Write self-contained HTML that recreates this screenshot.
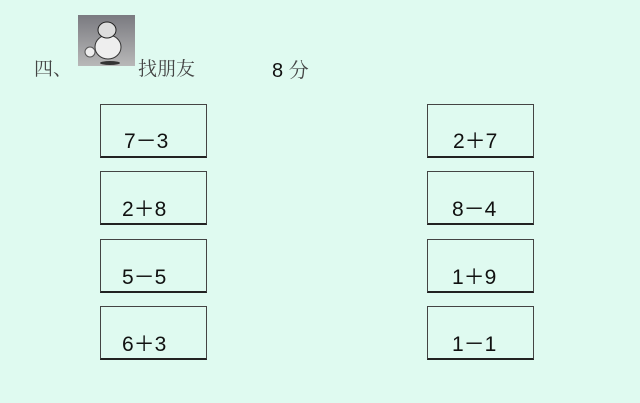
<!DOCTYPE html>
<html><head><style>
body{margin:0;width:640px;height:403px;background:#dffaf0;position:relative;overflow:hidden;font-family:"Liberation Sans","Noto Sans CJK SC",sans-serif;}
.b{position:absolute;width:105px;height:51px;border:1.5px solid #444;border-bottom:2.5px solid #222;box-sizing:content-box;}
.t{position:absolute;font-size:21px;color:#111;}
.h{position:absolute;font-family:"Noto Serif CJK SC",serif;font-size:19px;color:#444;}
</style></head><body>
<div class="h" style="left:34px;top:54px">四、</div>
<div style="position:absolute;left:78px;top:15px;width:57px;height:51px;background:linear-gradient(#7a7a80,#b8b8b8);">
<svg width="57" height="51"><ellipse cx="30" cy="32" rx="13" ry="12" fill="#eee" stroke="#333"/><ellipse cx="29" cy="15" rx="9" ry="8" fill="#ddd" stroke="#222"/><circle cx="12" cy="37" r="5" fill="#eee" stroke="#555"/><ellipse cx="32" cy="48" rx="10" ry="2" fill="#333"/></svg></div>
<div class="h" style="left:138px;top:54px">找朋友</div>
<div class="t" style="left:272px;top:54px;font-size:20px">8 <span style="font-family:'Noto Serif CJK SC',serif;color:#444">分</span></div>

<div class="b" style="left:100px;top:104px"></div><div class="t" style="left:124px;top:125px">7－3</div>
<div class="b" style="left:100px;top:171px"></div><div class="t" style="left:122px;top:193px">2＋8</div>
<div class="b" style="left:100px;top:239px"></div><div class="t" style="left:122px;top:261px">5－5</div>
<div class="b" style="left:100px;top:306px"></div><div class="t" style="left:122px;top:328px">6＋3</div>

<div class="b" style="left:427px;top:104px"></div><div class="t" style="left:453px;top:125px">2＋7</div>
<div class="b" style="left:427px;top:171px"></div><div class="t" style="left:452px;top:193px">8－4</div>
<div class="b" style="left:427px;top:239px"></div><div class="t" style="left:452px;top:261px">1＋9</div>
<div class="b" style="left:427px;top:306px"></div><div class="t" style="left:452px;top:328px">1－1</div>
</body></html>
